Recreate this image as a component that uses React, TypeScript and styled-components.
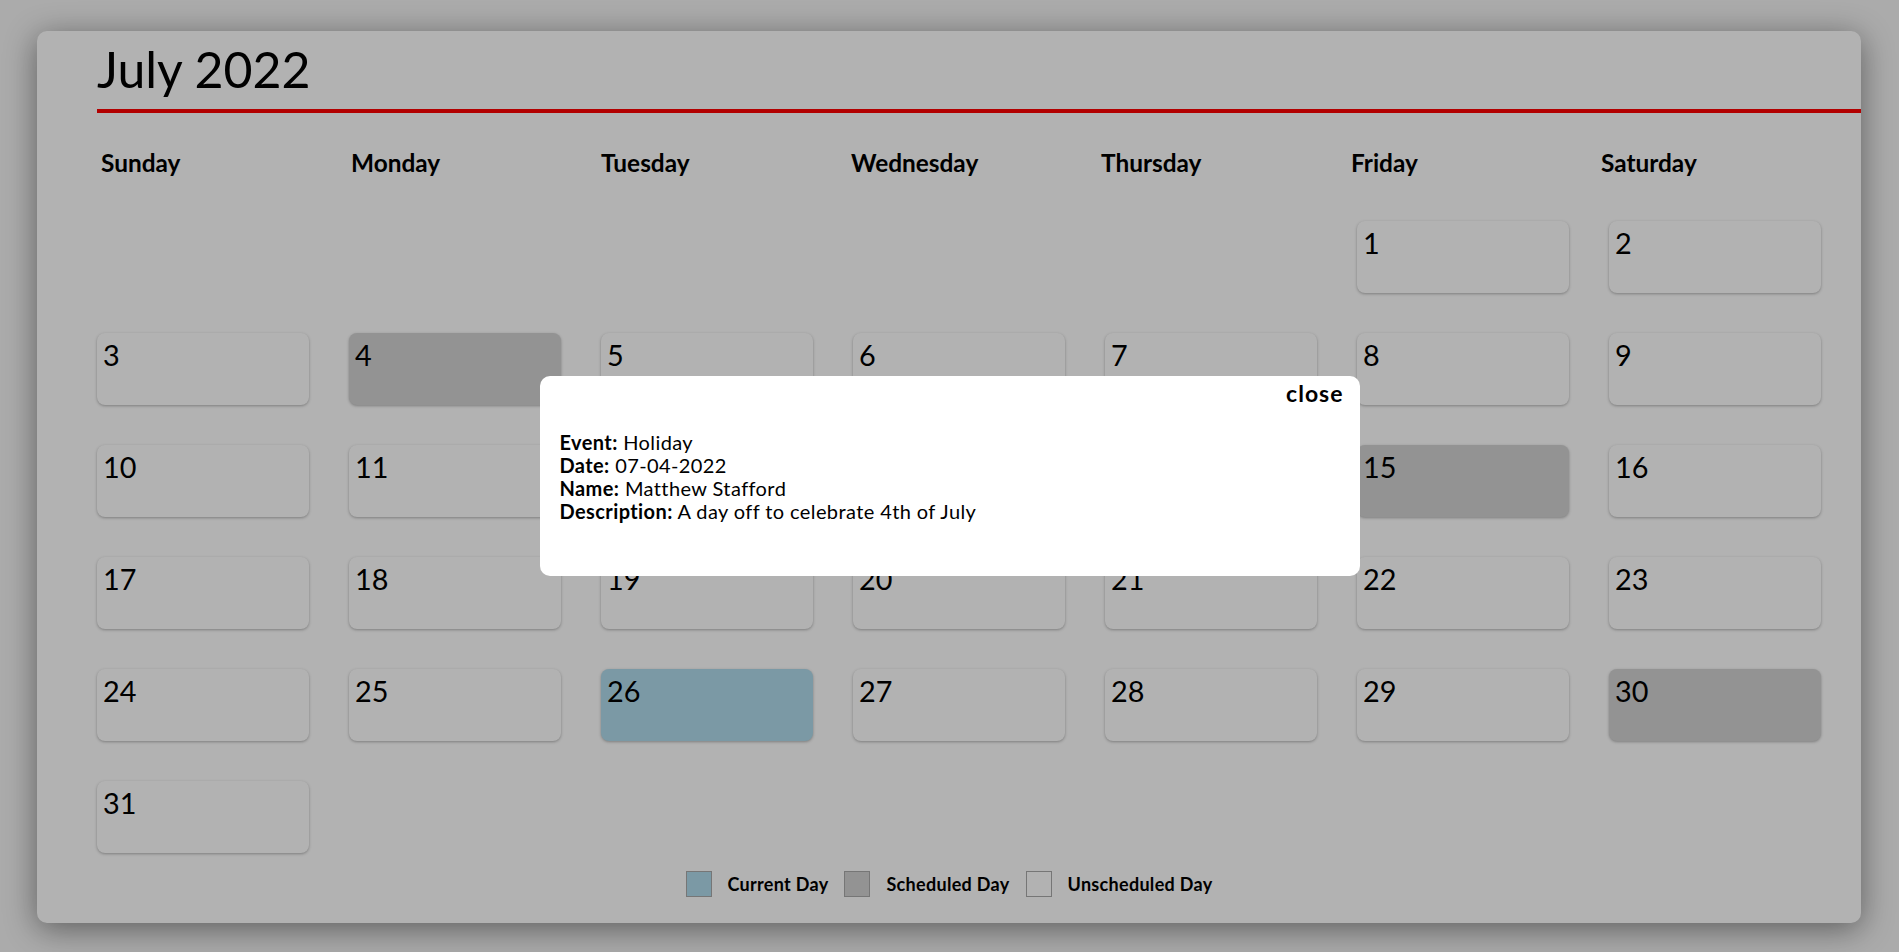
import React from "react";
import styled, { createGlobalStyle } from "styled-components";

const GlobalStyle = createGlobalStyle`
  html, body {
    margin: 0;
    padding: 0;
    background: #f5f5f5;
    font-family: "Trebuchet MS", Lato, "Noto Sans", sans-serif;
    color: #000;
  }
  * { box-sizing: border-box; }
`;

const Page = styled.div`
  min-height: 952px;
  padding: 31px 38px 29px 37px;
`;

const Card = styled.div`
  background: #ffffff;
  border-radius: 10px;
  box-shadow: 0 6px 32px rgba(0, 0, 0, 0.45);
  height: 892px;
  padding: 10px 0 0 60px;
  display: flex;
  flex-direction: column;
`;

const Title = styled.h1`
  margin: 0;
  font-size: 50px;
  font-weight: 400;
  line-height: 56px;
  padding-bottom: 12px;
  border-bottom: 4px solid #ff0000;
`;

const WeekHeader = styled.div`
  display: grid;
  grid-template-columns: repeat(7, 1fr);
  padding-right: 14px;
  margin-top: 35px;
`;

const DayName = styled.div`
  font-size: 24.4px;
  font-weight: 700;
  line-height: 30px;
  padding-left: 4px;
`;

const DaysGrid = styled.div`
  display: grid;
  grid-template-columns: repeat(7, 1fr);
  grid-auto-rows: 72px;
  row-gap: 40px;
  margin-top: 43px;
`;

type Kind = "none" | "current" | "scheduled" | "empty";

const bgFor: Record<Kind, string> = {
  none: "#ffffff",
  current: "#b0dcec",
  scheduled: "#d3d3d3",
  empty: "transparent",
};

const DayCell = styled.div<{ $kind: Kind }>`
  margin-right: 40px;
  border-radius: 8px;
  background: ${(p) => bgFor[p.$kind]};
  box-shadow: ${(p) => (p.$kind === "empty" ? "none" : "0 1px 3px rgba(0, 0, 0, 0.3)")};
  padding: 4px 6px;
  font-size: 28.8px;
  line-height: 36px;
  cursor: ${(p) => (p.$kind === "empty" ? "default" : "pointer")};
`;

const Legend = styled.div`
  display: flex;
  justify-content: center;
  align-items: center;
  gap: 16px;
  margin-top: 18px;
  padding-right: 60px;
`;

const LegendItem = styled.div`
  display: flex;
  align-items: center;
  gap: 16px;
  font-size: 18px;
  letter-spacing: 0.3px;
  font-weight: 700;
`;

const Swatch = styled.span<{ $kind: Kind }>`
  display: inline-block;
  width: 26px;
  height: 26px;
  border: 1px solid #a9a9a9;
  background: ${(p) => bgFor[p.$kind]};
`;

const Overlay = styled.div`
  position: fixed;
  inset: 0;
  background: rgba(0, 0, 0, 0.3);
`;

const Modal = styled.div`
  position: fixed;
  left: 50%;
  top: 50%;
  transform: translate(-50%, -50%);
  width: 820px;
  height: 200px;
  background: #ffffff;
  border-radius: 10px;
  padding: 4px 16px 0 20px;
  display: flex;
  flex-direction: column;
`;

const CloseButton = styled.button`
  align-self: flex-end;
  background: none;
  border: none;
  padding: 0;
  margin: 0;
  font-family: inherit;
  font-size: 23px;
  letter-spacing: 1px;
  font-weight: 700;
  line-height: 26px;
  color: #000;
  cursor: pointer;
`;

const Details = styled.div`
  margin-top: 25px;
  font-size: 20px;
  letter-spacing: 0.4px;
  line-height: 23px;
`;

const DetailLine = styled.div``;

const Label = styled.b`
  font-weight: 700;
`;

const dayNames = ["Sunday", "Monday", "Tuesday", "Wednesday", "Thursday", "Friday", "Saturday"];

const scheduled = new Set([4, 15, 30]);
const today = 26;

export default function App() {
  const cells: { day: number | null; kind: Kind }[] = [];
  for (let i = 0; i < 5; i++) cells.push({ day: null, kind: "empty" });
  for (let d = 1; d <= 31; d++) {
    cells.push({
      day: d,
      kind: d === today ? "current" : scheduled.has(d) ? "scheduled" : "none",
    });
  }

  return (
    <>
      <GlobalStyle />
      <Page>
        <Card>
          <Title>July 2022</Title>
          <WeekHeader>
            {dayNames.map((n) => (
              <DayName key={n}>{n}</DayName>
            ))}
          </WeekHeader>
          <DaysGrid>
            {cells.map((c, i) => (
              <DayCell key={i} $kind={c.kind}>
                {c.day ?? ""}
              </DayCell>
            ))}
          </DaysGrid>
          <Legend>
            <LegendItem>
              <Swatch $kind="current" />
              Current Day
            </LegendItem>
            <LegendItem>
              <Swatch $kind="scheduled" />
              Scheduled Day
            </LegendItem>
            <LegendItem>
              <Swatch $kind="none" />
              Unscheduled Day
            </LegendItem>
          </Legend>
        </Card>
      </Page>
      <Overlay />
      <Modal>
        <CloseButton>close</CloseButton>
        <Details>
          <DetailLine>
            <Label>Event:</Label> Holiday
          </DetailLine>
          <DetailLine>
            <Label>Date:</Label> 07-04-2022
          </DetailLine>
          <DetailLine>
            <Label>Name:</Label> Matthew Stafford
          </DetailLine>
          <DetailLine>
            <Label>Description:</Label> A day off to celebrate 4th of July
          </DetailLine>
        </Details>
      </Modal>
    </>
  );
}
